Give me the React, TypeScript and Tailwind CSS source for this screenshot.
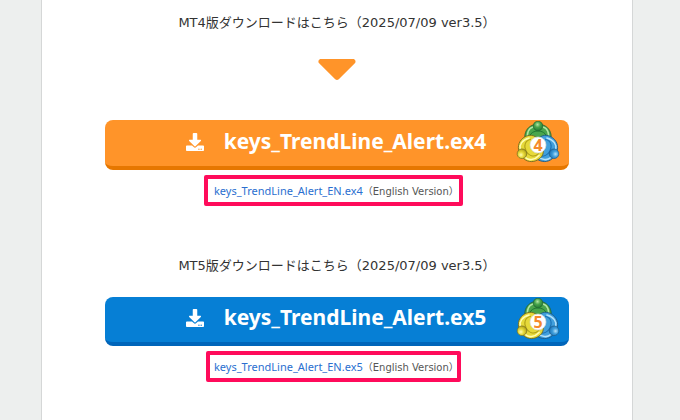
import { useId } from "react"
import { FaCaretDown, FaDownload } from "react-icons/fa"
import clsx from "clsx"

type MetaTraderLogoProps = {
  version: string
}

const figures = [
  { name: "green", turn: 0, light: "#b4e6a4", base: "#4aa54c", dark: "#1f7a33", line: "#245f31" },
  { name: "blue", turn: 120, light: "#b4e2fb", base: "#419fdc", dark: "#1a71b4", line: "#205a86" },
  { name: "yellow", turn: 240, light: "#fffdb4", base: "#e6d93a", dark: "#b0a018", line: "#716a20" },
]

function MetaTraderLogo({ version }: MetaTraderLogoProps) {
  const id = useId()

  return (
    <svg viewBox="0 0 44 44" className="size-11" aria-hidden="true">
      <defs>
        {figures.map(({ name, light, base, dark }) => (
          <radialGradient key={name} id={`${id}-${name}`} cx="0.45" cy="0.35" r="0.65">
            <stop offset="0" stopColor={light} />
            <stop offset="0.45" stopColor={base} />
            <stop offset="1" stopColor={dark} />
          </radialGradient>
        ))}
      </defs>
      {figures.map(({ name, turn, light, base, dark, line }) => (
        <g key={name} transform={`rotate(${turn} 22 23.5)`}>
          <path d="M17 4C11 6 8 12 9 18C10 25 17 27 22 27S34 25 35 18C36 12 33 6 27 4Z" fill={base} stroke={line} strokeWidth="0.8" />
          <path d="M14 20C12 14 16 10 22 10S32 14 30 20" fill="none" stroke={dark} />
          <path d="M12 19C10 12 13 7 17 6M32 19C34 12 31 7 27 6" fill="none" stroke={light} strokeWidth="1.5" strokeLinecap="round" />
        </g>
      ))}
      {figures.map(({ name, turn, line }) => (
        <circle
          key={name}
          cx="22"
          cy="5"
          r="4.8"
          fill={`url(#${id}-${name})`}
          stroke={line}
          strokeWidth="0.6"
          transform={`rotate(${turn} 22 23.5)`}
        />
      ))}
      <circle cx="22" cy="24" r="8" fill="#fff" stroke="#d5d9d9" strokeWidth="0.7" />
      <text x="22" y="30" textAnchor="middle" fill="#f58a2c" className="font-['Noto_Sans',sans-serif] text-[16px] font-bold">
        {version}
      </text>
    </svg>
  )
}

const downloads = [
  {
    version: "4",
    button: "h-[50px] pb-0.5 border-[#e67700] bg-[#ff9429]",
    frame: "w-[259px] pl-1.5",
  },
  {
    version: "5",
    button: "h-[49px] pb-1 border-[#0065ba] bg-[#067fd5]",
    frame: "w-[255px] pl-1",
  },
]

export default function App() {
  return (
    <div className="min-h-screen bg-[#edefee] pr-[47px] pl-[41px] font-['DejaVu_Sans','Noto_Sans_CJK_JP',sans-serif] text-[#333]">
      <main className="flex min-h-screen flex-col items-center border-x border-[#d5d7d7] bg-white px-[63px] pt-3">
        {downloads.map(({ version, button, frame }) => (
          <section key={version} className="flex w-full flex-col items-center">
            <p className="text-[13px] leading-[22px] whitespace-nowrap">
              MT{version}版ダウンロードはこちら（2025/07/09 ver3.5）
            </p>
            {version === "4" ? (
              <FaCaretDown size={64} className="mt-px mb-[21px] text-[#ff9429]" aria-hidden="true" />
            ) : (
              <div className="h-[20px]" />
            )}
            <button
              type="button"
              className={clsx(
                "relative flex w-full items-center justify-center rounded-lg border-b-4 pr-0.5 font-['Noto_Sans',sans-serif] text-[21px] font-bold whitespace-nowrap text-white",
                button,
              )}
            >
              <FaDownload size={18} className="mr-5" aria-hidden="true" />
              keys_TrendLine_Alert.ex{version}
              <span className="absolute top-px right-[9px]">
                <MetaTraderLogo version={version} />
              </span>
            </button>
            <p
              className={clsx(
                "mt-[5px] mr-[7px] mb-[49px] h-[31px] rounded-xs border-4 border-[#ff0b5b] text-[10px] leading-[23px] whitespace-nowrap text-[#555]",
                frame,
              )}
            >
              <a
                href={`#keys_TrendLine_Alert_EN.ex${version}`}
                className="font-['Noto_Sans',sans-serif] text-[11px] text-[#2b6fd0]"
              >
                keys_TrendLine_Alert_EN.ex{version}
              </a>
              （English Version）
            </p>
          </section>
        ))}
      </main>
    </div>
  )
}
